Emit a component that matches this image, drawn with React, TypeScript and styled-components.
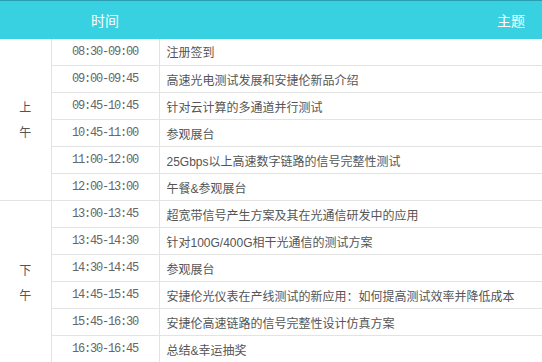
import styled, { createGlobalStyle } from 'styled-components';

const GlobalStyle = createGlobalStyle`
  html, body {
    margin: 0;
    padding: 0;
    background: #ffffff;
  }
  body {
    font-family: "Liberation Sans", "Noto Sans CJK SC", sans-serif;
  }
`;

type Session = { time: string; topic: string };
type Block = { label: string[]; sessions: Session[] };

const agenda: Block[] = [
  {
    label: ['上', '午'],
    sessions: [
      { time: '08:30-09:00', topic: '注册签到' },
      { time: '09:00-09:45', topic: '高速光电测试发展和安捷伦新品介绍' },
      { time: '09:45-10:45', topic: '针对云计算的多通道并行测试' },
      { time: '10:45-11:00', topic: '参观展台' },
      { time: '11:00-12:00', topic: '25Gbps以上高速数字链路的信号完整性测试' },
      { time: '12:00-13:00', topic: '午餐&参观展台' },
    ],
  },
  {
    label: ['下', '午'],
    sessions: [
      { time: '13:00-13:45', topic: '超宽带信号产生方案及其在光通信研发中的应用' },
      { time: '13:45-14:30', topic: '针对100G/400G相干光通信的测试方案' },
      { time: '14:30-14:45', topic: '参观展台' },
      { time: '14:45-15:45', topic: '安捷伦光仪表在产线测试的新应用：如何提高测试效率并降低成本' },
      { time: '15:45-16:30', topic: '安捷伦高速链路的信号完整性设计仿真方案' },
      { time: '16:30-16:45', topic: '总结&幸运抽奖' },
    ],
  },
];

const App = () => (
  <>
    <GlobalStyle />
    <Table>
      <colgroup>
        <col style={{ width: 51 }} />
        <col style={{ width: 108 }} />
        <col />
      </colgroup>
      <thead>
        <tr>
          <HeadCell />
          <HeadCell align="center">时间</HeadCell>
          <HeadCell align="right">主题</HeadCell>
        </tr>
      </thead>
      <tbody>
        {agenda.map((block) =>
          block.sessions.map((s, i) => (
            <Row key={s.time}>
              {i === 0 && (
                <PeriodCell rowSpan={block.sessions.length}>
                  {block.label.map((ch) => (
                    <PeriodChar key={ch}>{ch}</PeriodChar>
                  ))}
                </PeriodCell>
              )}
              <TimeCell>{s.time}</TimeCell>
              <TopicCell>{s.topic}</TopicCell>
            </Row>
          ))
        )}
      </tbody>
    </Table>
  </>
);

const Table = styled.table`
  width: 542px;
  border-collapse: collapse;
  table-layout: fixed;
  border-spacing: 0;
`;

const HeadCell = styled.th<{ align?: 'center' | 'right' }>`
  box-sizing: border-box;
  height: 38px;
  padding: 1px 0 0 0;
  background: #38d1e2;
  border-top: 1px solid #2a9fb0;
  color: #ffffff;
  font-size: 14px;
  font-weight: normal;
  text-align: ${(p) => p.align || 'left'};
  padding-right: ${(p) => (p.align === 'right' ? '17px' : '0')};
  font-family: "Noto Sans CJK SC", sans-serif;
`;

const Row = styled.tr`
  height: 27px;
`;

const PeriodCell = styled.td`
  border-right: 1px solid #e3e3e3;
  border-bottom: 1px solid #e3e3e3;
  text-align: center;
  vertical-align: middle;
  padding: 0;
`;

const PeriodChar = styled.div`
  line-height: 25px;
  font-size: 12px;
  color: #555555;
  font-family: "Noto Sans CJK SC", sans-serif;
`;

const TimeCell = styled.td`
  border-right: 1px solid #e3e3e3;
  border-bottom: 1px solid #e3e3e3;
  text-align: center;
  padding: 0;
  font-family: "Liberation Mono", monospace;
  font-size: 12px;
  letter-spacing: -1.2px;
  color: #666666;
`;

const TopicCell = styled.td`
  border-bottom: 1px solid #e3e3e3;
  padding: 0 0 0 7px;
  font-size: 12px;
  color: #555555;
  white-space: nowrap;
  font-family: "Liberation Sans", "Noto Sans CJK SC", sans-serif;
`;

export default App;
